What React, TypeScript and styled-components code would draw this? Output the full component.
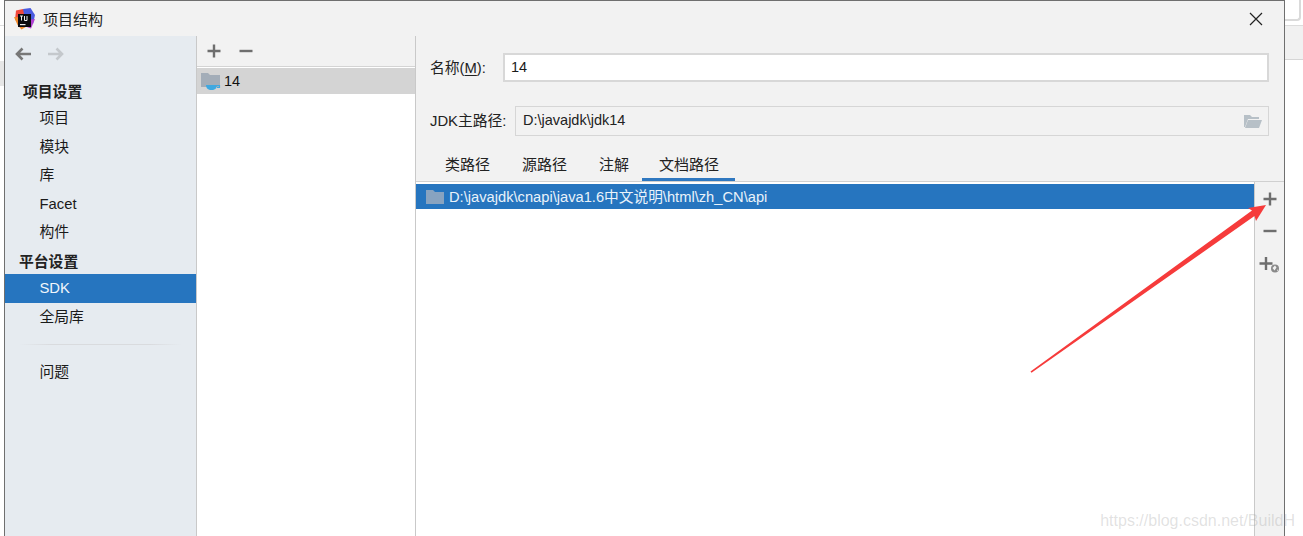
import React from "react";
import styled, { createGlobalStyle } from "styled-components";

const Global = createGlobalStyle`
  html, body { margin: 0; padding: 0; background: #fff; }
  body { width: 1303px; height: 536px; overflow: hidden; font-family: "Liberation Sans", "Noto Sans CJK SC", sans-serif; font-size: 15px; color: #111; }
`;

const Page = styled.div`
  position: relative;
  width: 1303px;
  height: 536px;
  display: flex;
  background: #fff;
`;
const LeftGutter = styled.div`
  width: 4px;
  flex: none;
`;
const LeftLine = styled.div`
  height: 26px;
  box-sizing: border-box;
  border-bottom: 1px solid #dedede;
  margin-bottom: 35px;
`;
const LeftScrap = styled.div`
  height: 25px;
  background: #e6e6e6;
`;
const RightGutter = styled.div`
  flex: 1;
`;
const RightTop = styled.div`
  height: 26px;
  box-sizing: border-box;
  border-bottom: 1px solid #dcdcdc;
`;
const RightBand = styled.div`
  height: 34px;
  box-sizing: border-box;
  background: #f1f1f1;
  border-bottom: 1px solid #d6d6d6;
`;
const RightScrap = styled.div`
  height: 21px;
  width: 16px;
  box-sizing: border-box;
  background: #fff;
  border: 2px solid #dadada;
  border-top: none;
  border-left: none;
  border-radius: 0 0 4px 0;
`;
const Window = styled.div`
  width: 1281px;
  height: 536px;
  flex: none;
  box-sizing: border-box;
  border: 1px solid #6f6f6f;
  border-bottom: none;
  display: flex;
  flex-direction: column;
  background: #f2f2f2;
`;
const TitleBar = styled.div`
  height: 35px;
  flex: none;
  display: flex;
  align-items: center;
  padding: 0 21px 0 9px;
  gap: 8px;
  background: #f2f2f2;
`;
const Title = styled.div`
  flex: 1;
  font-size: 15px;
  color: #222;
`;
const Body = styled.div`
  flex: 1;
  display: flex;
  min-height: 0;
`;
const Sidebar = styled.div`
  width: 192px;
  flex: none;
  box-sizing: border-box;
  background: #e6ebf0;
  border-right: 1px solid #c9c9c9;
  display: flex;
  flex-direction: column;
`;
const NavArrows = styled.div`
  height: 35px;
  display: flex;
  align-items: center;
  gap: 15px;
  padding: 1px 0 0 9px;
  box-sizing: border-box;
  margin-bottom: 7px;
`;
const SectionHead = styled.div<{ $indent: number; $top?: number }>`
  height: 26px;
  margin-top: ${(p) => p.$top ?? 0}px;
  line-height: 29px;
  padding-left: ${(p) => p.$indent}px;
  font-weight: 700;
  font-size: 14.800px;
  color: #222;
`;
const NavItem = styled.div<{ $active?: boolean }>`
  height: 28.500px;
  flex: none;
  line-height: 29px;
  padding-left: 34.500px;
  font-size: 14.800px;
  color: ${(p) => (p.$active ? "#f1f6fb" : "#1a1a1a")};
  background: ${(p) => (p.$active ? "#2675bf" : "transparent")};
`;
const Divider = styled.div`
  height: 1px;
  flex: none;
  margin: 13px 14px 13px;
  background: linear-gradient(90deg, #e6ebf0, #d9dbde 20%, #d9dbde 80%, #e6ebf0);
`;
const MiddlePane = styled.div`
  width: 219px;
  flex: none;
  box-sizing: border-box;
  background: #fff;
  border-right: 1px solid #c9c9c9;
  display: flex;
  flex-direction: column;
`;
const MiniToolbar = styled.div`
  height: 31px;
  flex: none;
  box-sizing: border-box;
  background: #f2f2f2;
  border-bottom: 1px solid #d4d4d4;
  display: flex;
  align-items: center;
  gap: 16px;
  padding: 0 0 0 9px;
`;
const SdkRow = styled.div`
  margin-top: 1px;
  height: 26px;
  display: flex;
  align-items: center;
  gap: 3px;
  padding-left: 4px;
  background: #d4d4d4;
  font-size: 14.500px;
  color: #111;
`;
const Detail = styled.div`
  flex: 1;
  min-width: 0;
  display: flex;
  flex-direction: column;
  background: #f2f2f2;
`;
const FormRow = styled.div<{ $top: number }>`
  display: flex;
  align-items: center;
  margin-top: ${(p) => p.$top}px;
  padding: 0 15px 0 14px;
`;
const FieldLabel = styled.label<{ $width: number; $lift: number }>`
  width: ${(p) => p.$width}px;
  flex: none;
  padding-bottom: ${(p) => p.$lift}px;
  font-size: 14.800px;
  color: #222;
  u { text-underline-offset: 2px; }
`;
const NameField = styled.div`
  flex: 1;
  height: 29px;
  box-sizing: border-box;
  background: #fff;
  border: 2px solid #d8d8d8;
  padding-left: 6px;
  line-height: 25px;
  font-size: 14.500px;
  color: #1a1a1a;
`;
const PathField = styled.div`
  flex: 1;
  height: 30px;
  box-sizing: border-box;
  background: #f2f2f2;
  border: 1px solid #d6d6d6;
  padding: 0 6px 0 7px;
  display: flex;
  align-items: center;
  justify-content: space-between;
  font-size: 14.500px;
  color: #222;
`;
const FieldText = styled.span`
  padding-bottom: 2px;
`;
const Tabs = styled.div`
  margin-top: 17px;
  height: 29px;
  flex: none;
  box-sizing: border-box;
  display: flex;
  padding-left: 13px;
  border-bottom: 1px solid #d0d0d0;
`;
const Tab = styled.div<{ $active?: boolean }>`
  height: 28px;
  box-sizing: border-box;
  padding: ${(p) => (p.$active ? "0 16px 0 17px" : "0 16px")};
  margin-left: ${(p) => (p.$active ? "-3px" : "0")};
  line-height: 23px;
  font-size: 15px;
  color: #222;
  border-bottom: 3px solid ${(p) => (p.$active ? "#2f78c0" : "transparent")};
`;
const PathArea = styled.div`
  flex: 1;
  min-height: 0;
  display: flex;
`;
const PathList = styled.div`
  flex: 1;
  background: #fff;
`;
const PathRow = styled.div`
  margin-top: 2px;
  height: 25px;
  background: #2675bf;
  color: #e9f2fa;
  font-size: 14.700px;
  display: flex;
  align-items: center;
  gap: 5px;
  padding-left: 10px;
`;
const PathText = styled.span`
  padding-bottom: 3px;
`;
const SideTools = styled.div`
  width: 30px;
  flex: none;
  box-sizing: border-box;
  border-left: 1px solid #c9c9c9;
  display: flex;
  flex-direction: column;
  align-items: center;
  padding-top: 9px;
  gap: 16px;
  background: #f2f2f2;
`;
const WebIcon = styled.svg`
  margin-top: -1px;
`;
const ArrowOverlay = styled.svg`
  position: absolute;
  left: 0;
  top: 0;
  pointer-events: none;
`;
const Watermark = styled.div`
  position: absolute;
  right: 8px;
  bottom: 6px;
  font-size: 16px;
  color: rgba(165, 165, 165, 0.32);
`;

const Plus = () => (
  <svg width="16" height="16" viewBox="0 0 16 16">
    <path d="M8 1.500v13M1.500 8h13" stroke="#6e6e6e" strokeWidth="2.400" />
  </svg>
);
const Minus = () => (
  <svg width="16" height="16" viewBox="0 0 16 16">
    <path d="M1.500 8h13" stroke="#6e6e6e" strokeWidth="2.400" />
  </svg>
);
const PlusWeb = () => (
  <WebIcon width="22" height="20" viewBox="0 0 22 20">
    <path d="M7 3v13M0.500 9.500h13" stroke="#6e6e6e" strokeWidth="2.400" />
    <circle cx="16" cy="14.500" r="4" fill="#8a8a8a" />
    <path d="M13.500 14l2.500-2.500 1.500 2-2 3zM18 15.500l1 .5-1 1.500z" fill="#f2f2f2" />
  </WebIcon>
);
const BackArrow = ({ c }: { c: string }) => (
  <svg width="18" height="14" viewBox="0 0 18 14">
    <path d="M17 7H3M8.500 1.500L3 7l5.500 5.500" fill="none" stroke={c} strokeWidth="2.600" />
  </svg>
);
const ForwardArrow = ({ c }: { c: string }) => (
  <svg width="18" height="14" viewBox="0 0 18 14">
    <path d="M1 7h14M9.500 1.500L15 7l-5.500 5.500" fill="none" stroke={c} strokeWidth="2.600" />
  </svg>
);
const Logo = () => (
  <svg width="21" height="22" viewBox="0 0 21 22">
    <path d="M2 2.500l7-1.500 3 4-6 9-5-2z" fill="#f0473c" />
    <path d="M9 1l7.500-1 4.500 7-2 9-8-4z" fill="#4a5be0" />
    <path d="M0 9l3.500 8 4 4.500 5-3-5-9z" fill="#f08a2c" />
    <path d="M10 18l7 2.500 4-9.500-8 1z" fill="#b13fd0" />
    <rect x="4" y="6" width="13" height="13" fill="#0b0b0f" />
    <rect x="6" y="16" width="5.500" height="1.200" fill="#eee" />
    <path d="M6 8h3M7.500 8v4.500M10.500 8v4.500h2.500M13 8v4.500" fill="none" stroke="#eee" strokeWidth="1" />
  </svg>
);
const SdkFolder = () => (
  <svg width="20" height="20" viewBox="0 0 20 20">
    <path d="M0 2h7l2 2h10v12H0z" fill="#a3adb8" />
    <path d="M5 14h11c0 3-2 5-5.500 5S5 17 5 14z" fill="#3fa8e0" />
    <path d="M16 14.500h2.500v2H16" fill="none" stroke="#3fa8e0" strokeWidth="1.200" />
  </svg>
);
const PlainFolder = () => (
  <svg width="18" height="14" viewBox="0 0 18 14">
    <path d="M0 0h7l2 2h9v12H0z" fill="#88a3c0" />
  </svg>
);
const OpenFolder = () => (
  <svg width="19" height="15" viewBox="0 0 19 15">
    <path d="M1 1h6l2 2h7v2H5L2 13H1z" fill="#b7c0c7" />
    <path d="M5 6h14l-3 8H2z" fill="#b7c0c7" />
  </svg>
);
const CloseIcon = () => (
  <svg width="14" height="14" viewBox="0 0 14 14">
    <path d="M1 1l12 12M13 1L1 13" stroke="#222" strokeWidth="1.200" />
  </svg>
);

export default function App() {
  return (
    <Page>
      <Global />
      <LeftGutter>
        <LeftLine />
        <LeftScrap />
      </LeftGutter>
      <Window>
        <TitleBar>
          <Logo />
          <Title>项目结构</Title>
          <CloseIcon />
        </TitleBar>
        <Body>
          <Sidebar>
            <NavArrows>
              <BackArrow c="#777" />
              <ForwardArrow c="#c4c8cc" />
            </NavArrows>
            <SectionHead $indent={18}>项目设置</SectionHead>
            <NavItem>项目</NavItem>
            <NavItem>模块</NavItem>
            <NavItem>库</NavItem>
            <NavItem>Facet</NavItem>
            <NavItem>构件</NavItem>
            <SectionHead $indent={14} $top={1.5}>平台设置</SectionHead>
            <NavItem $active>SDK</NavItem>
            <NavItem>全局库</NavItem>
            <Divider />
            <NavItem>问题</NavItem>
          </Sidebar>
          <MiddlePane>
            <MiniToolbar>
              <Plus />
              <Minus />
            </MiniToolbar>
            <SdkRow>
              <SdkFolder />
              14
            </SdkRow>
          </MiddlePane>
          <Detail>
            <FormRow $top={17}>
              <FieldLabel $width={73} $lift={2}>
                名称(<u>M</u>):
              </FieldLabel>
              <NameField>14</NameField>
            </FormRow>
            <FormRow $top={24}>
              <FieldLabel $width={85} $lift={4}>JDK主路径:</FieldLabel>
              <PathField>
                <FieldText>D:\javajdk\jdk14</FieldText>
                <OpenFolder />
              </PathField>
            </FormRow>
            <Tabs>
              <Tab>类路径</Tab>
              <Tab>源路径</Tab>
              <Tab>注解</Tab>
              <Tab $active>文档路径</Tab>
            </Tabs>
            <PathArea>
              <PathList>
                <PathRow>
                  <PlainFolder />
                  <PathText>D:\javajdk\cnapi\java1.6中文说明\html\zh_CN\api</PathText>
                </PathRow>
              </PathList>
              <SideTools>
                <Plus />
                <Minus />
                <PlusWeb />
              </SideTools>
            </PathArea>
          </Detail>
        </Body>
      </Window>
      <RightGutter>
        <RightTop>
          <RightScrap />
        </RightTop>
        <RightBand />
      </RightGutter>
      <ArrowOverlay width="1303" height="536" viewBox="0 0 1303 536">
        <path d="M1030.500 371.500L1252 210.500 1248 208 1266 205 1256 221 1254.500 216 1031.500 372.800z" fill="#f63b3b" />
      </ArrowOverlay>
      <Watermark>https://blog.csdn.net/BuildH</Watermark>
    </Page>
  );
}
